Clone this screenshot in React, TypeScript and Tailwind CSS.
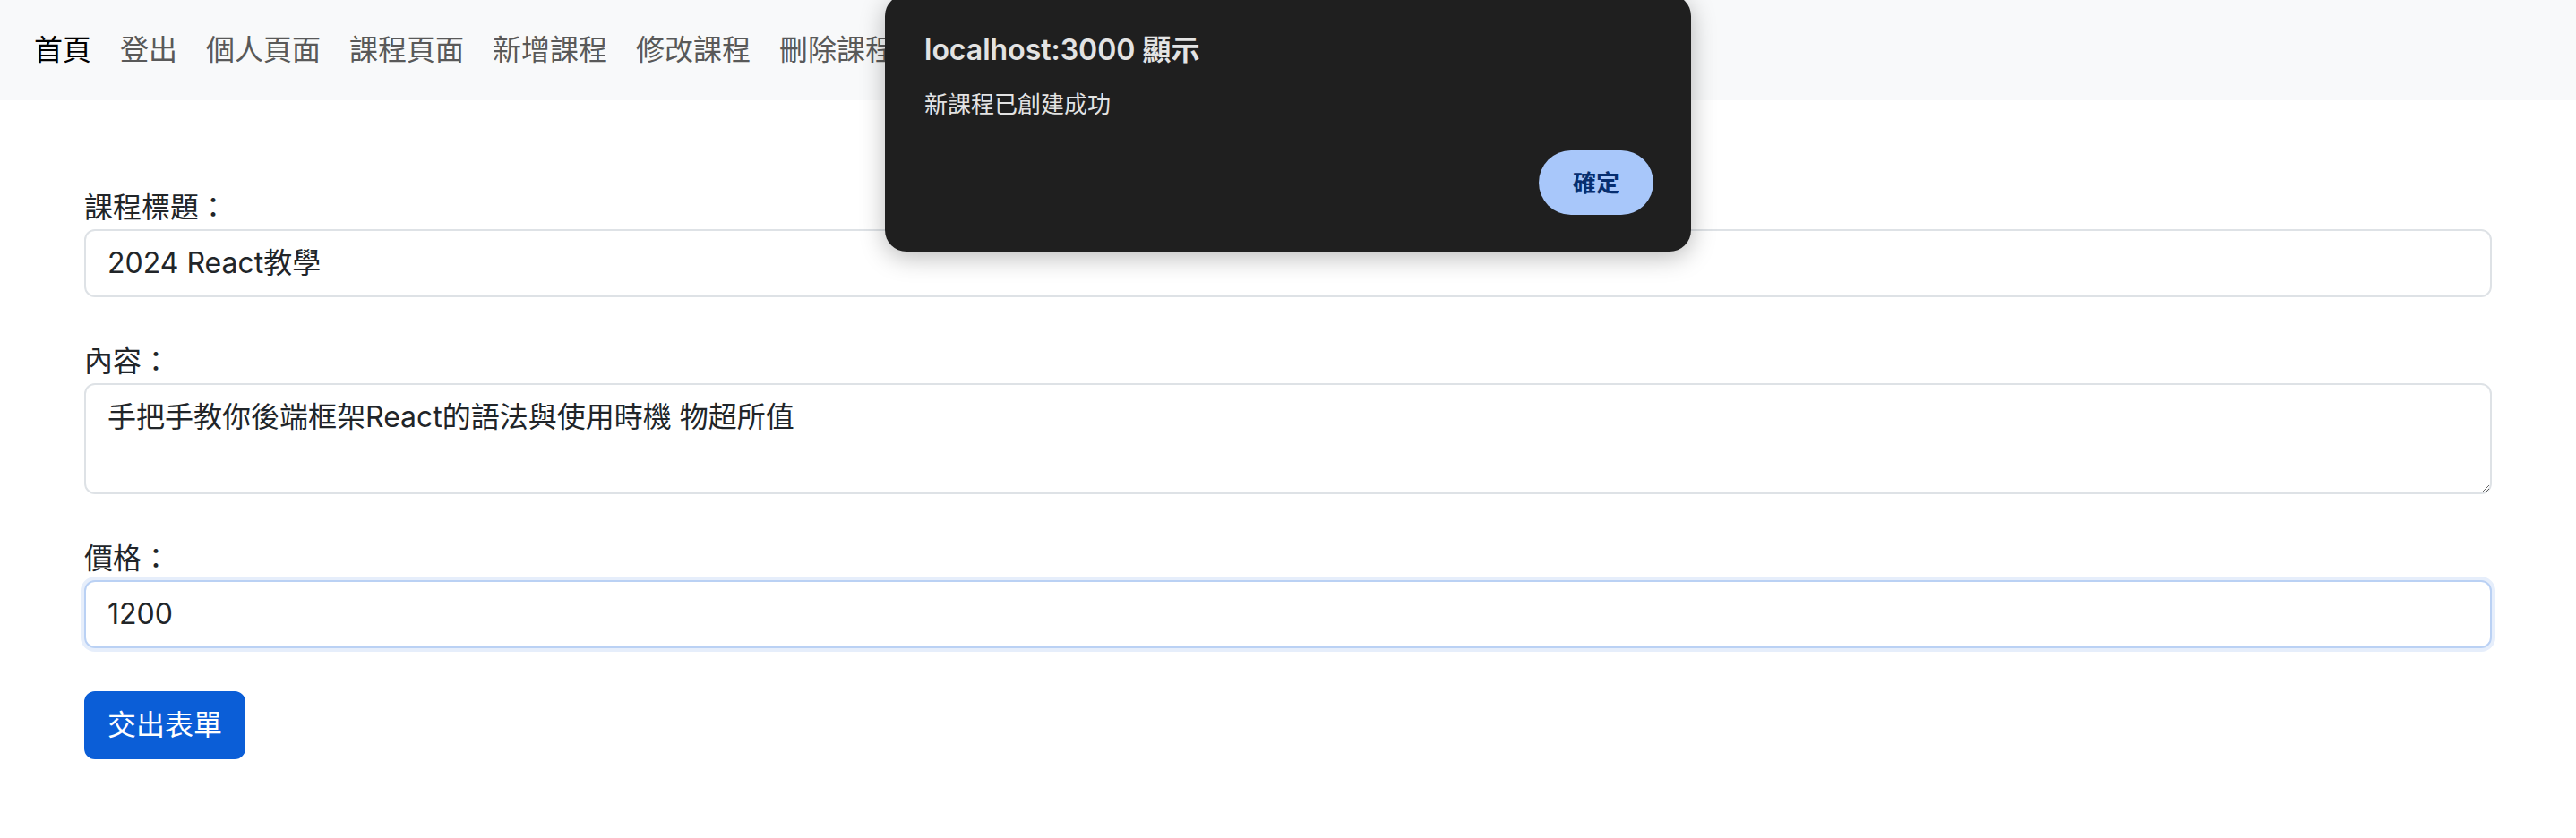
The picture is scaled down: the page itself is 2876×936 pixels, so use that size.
import { useState } from "react";

// ナビゲーション項目（ダイアログの裏に隠れる分は省く）
const navItems = ["首頁", "登出", "個人頁面", "課程頁面", "新增課程", "修改課程", "刪除課程"];

const inputClass =
  "block w-full rounded-[12px] border-2 border-[#dee2e6] bg-white px-[24px] py-[12px] text-[32px] leading-[48px] text-[#212529] outline-none";

const PostCourse = () => {
  const [title, setTitle] = useState("2024 React教學");
  const [content, setContent] = useState("手把手教你後端框架React的語法與使用時機 物超所值");
  const [price, setPrice] = useState("1200");

  return (
    <div className="relative bg-white font-[family-name:Inter,'Noto_Sans_CJK_TC',sans-serif] text-[#212529]">
      {/* ナビバー */}
      <nav className="flex h-[112px] items-center bg-[#f8f9fa] px-[22px]">
        {navItems.map((item, i) => (
          <a
            key={item}
            href="#"
            className={`px-[16px] py-[16px] text-[32px] leading-[48px] ${i === 0 ? "text-black" : "text-[#595959]"}`}
          >
            {item}
          </a>
        ))}
      </nav>

      {/* フォーム */}
      <div className="px-[94px] pt-[96px] pb-[40px]">
        <div className="mb-[48px]">
          <label className="block text-[32px] leading-[48px]">課程標題：</label>
          <input className={inputClass} value={title} onChange={(e) => setTitle(e.target.value)} />
        </div>
        <div className="mb-[48px]">
          <label className="block text-[32px] leading-[48px]">內容：</label>
          <textarea
            rows={2}
            className={`${inputClass} resize-y`}
            value={content}
            onChange={(e) => setContent(e.target.value)}
          />
        </div>
        <div className="mb-[48px]">
          <label className="block text-[32px] leading-[48px]">價格：</label>
          <input
            className="block w-full rounded-[12px] border-2 border-[#bad1f4] bg-white px-[24px] py-[12px] text-[32px] leading-[48px] text-[#212529] shadow-[0_0_0_4px_#e6eefb] outline-none"
            value={price}
            onChange={(e) => setPrice(e.target.value)}
          />
        </div>
        <button className="rounded-[12px] border-2 border-[#0b5ed7] bg-[#0b5ed7] px-[24px] py-[12px] text-[32px] leading-[48px] text-white">
          交出表單
        </button>
      </div>

      {/* ブラウザの alert ダイアログ */}
      <div className="absolute left-[988px] top-[-6px] flex h-[287px] w-[900px] flex-col rounded-[24px] bg-[#1f1f1f] pl-[44px] pr-[42px] pt-[42px] pb-[41px] shadow-[0_6px_28px_rgba(0,0,0,0.28)]">
        <div className="text-[32px] font-semibold leading-[40px] text-[#e3e3e3]">localhost:3000 顯示</div>
        <div className="mt-[21px] text-[26px] leading-[39px] text-[#e3e3e3]">新課程已創建成功</div>
        <div className="mt-auto flex justify-end">
          <button className="h-[72px] w-[128px] rounded-full bg-[#a8c7fa] text-[26px] font-bold text-[#062e6f]">
            確定
          </button>
        </div>
      </div>
    </div>
  );
};

export default PostCourse;
